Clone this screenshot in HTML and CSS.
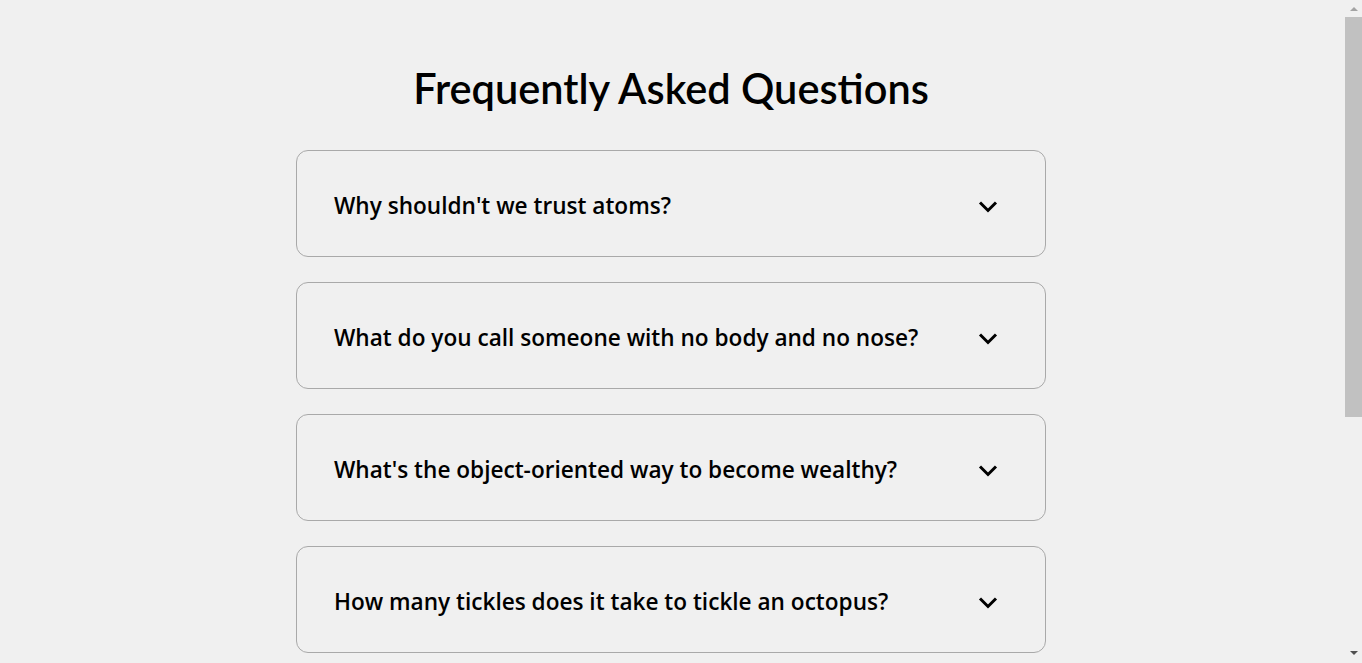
FILE: index.html
```html
<!DOCTYPE html>
<html lang="en">
<head>
<meta charset="utf-8">
<title>FAQ</title>
<link rel="stylesheet" href="styles.css">
</head>
<body>
<main class="faq">
  <h1 class="faq-title">Frequently Asked Questions</h1>
  <div class="faq-list">
    <div class="faq-item">
      <h3 class="faq-question">Why shouldn't we trust atoms?</h3>
      <button class="faq-toggle" aria-label="Toggle"><svg viewBox="0 0 24 24" width="24" height="24"><path d="M4 10.5l8 8 8-8" fill="none" stroke="#000" stroke-width="3"/></svg></button>
    </div>
    <div class="faq-item">
      <h3 class="faq-question">What do you call someone with no body and no nose?</h3>
      <button class="faq-toggle" aria-label="Toggle"><svg viewBox="0 0 24 24" width="24" height="24"><path d="M4 10.5l8 8 8-8" fill="none" stroke="#000" stroke-width="3"/></svg></button>
    </div>
    <div class="faq-item">
      <h3 class="faq-question">What's the object-oriented way to become wealthy?</h3>
      <button class="faq-toggle" aria-label="Toggle"><svg viewBox="0 0 24 24" width="24" height="24"><path d="M4 10.5l8 8 8-8" fill="none" stroke="#000" stroke-width="3"/></svg></button>
    </div>
    <div class="faq-item">
      <h3 class="faq-question">How many tickles does it take to tickle an octopus?</h3>
      <button class="faq-toggle" aria-label="Toggle"><svg viewBox="0 0 24 24" width="24" height="24"><path d="M4 10.5l8 8 8-8" fill="none" stroke="#000" stroke-width="3"/></svg></button>
    </div>
    <div class="faq-item">
      <h3 class="faq-question">What is: 1 + 1?</h3>
      <button class="faq-toggle" aria-label="Toggle"><svg viewBox="0 0 24 24" width="24" height="24"><path d="M4 10.5l8 8 8-8" fill="none" stroke="#000" stroke-width="3"/></svg></button>
    </div>
    <div class="faq-item">
      <h3 class="faq-question">Why did the scarecrow win an award?</h3>
      <button class="faq-toggle" aria-label="Toggle"><svg viewBox="0 0 24 24" width="24" height="24"><path d="M4 10.5l8 8 8-8" fill="none" stroke="#000" stroke-width="3"/></svg></button>
    </div>
  </div>
</main>
<div class="scrollbar" aria-hidden="true">
  <span class="scroll-arrow scroll-up"></span>
  <span class="scroll-thumb"></span>
  <span class="scroll-arrow scroll-down"></span>
</div>
</body>
</html>
```
FILE: styles.css
```css
* { box-sizing: border-box; }
html, body { margin: 0; padding: 0; }
body {
  background: #f0f0f0;
  font-family: "Lato", "Noto Sans", sans-serif;
  color: #000;
  padding-right: 20px;
}
.faq {
  max-width: 750px;
  margin: 0 auto;
  padding: 63px 0 125px;
}
.faq-title {
  margin: 0 0 37px;
  text-align: center;
  font-family: "Lato", sans-serif;
  font-size: 41.5px;
  font-weight: 600;
  line-height: 50px;
}
.faq-list {
  display: flex;
  flex-direction: column;
  gap: 25px;
}
.faq-item {
  display: flex;
  align-items: center;
  justify-content: space-between;
  height: 107px;
  padding: 0 42px 0 37px;
  border: 1px solid #a9a9a9;
  border-radius: 12px;
}
.faq-question {
  margin: 0;
  padding-top: 4px;
  font-family: "Open Sans", sans-serif;
  font-size: 22.6px;
  font-weight: 600;
  line-height: 30px;
}
.faq-toggle {
  display: flex;
  align-items: center;
  justify-content: center;
  width: 30px;
  height: 30px;
  padding: 0;
  border: 0;
  background: transparent;
}
.scrollbar {
  position: fixed;
  top: 0;
  right: 0;
  width: 17px;
  height: 100vh;
  background: #f0f0f0;
  display: flex;
  flex-direction: column;
  align-items: center;
}
.scroll-arrow {
  width: 0;
  height: 0;
  border-left: 4px solid transparent;
  border-right: 4px solid transparent;
}
.scroll-up {
  margin-top: 7px;
  border-bottom: 4px solid #a3a3a3;
}
.scroll-down {
  margin-top: auto;
  margin-bottom: 8px;
  border-top: 4px solid #505050;
}
.scroll-thumb {
  margin-top: 6px;
  width: 17px;
  height: 400px;
  background: #c1c1c1;
}
```
